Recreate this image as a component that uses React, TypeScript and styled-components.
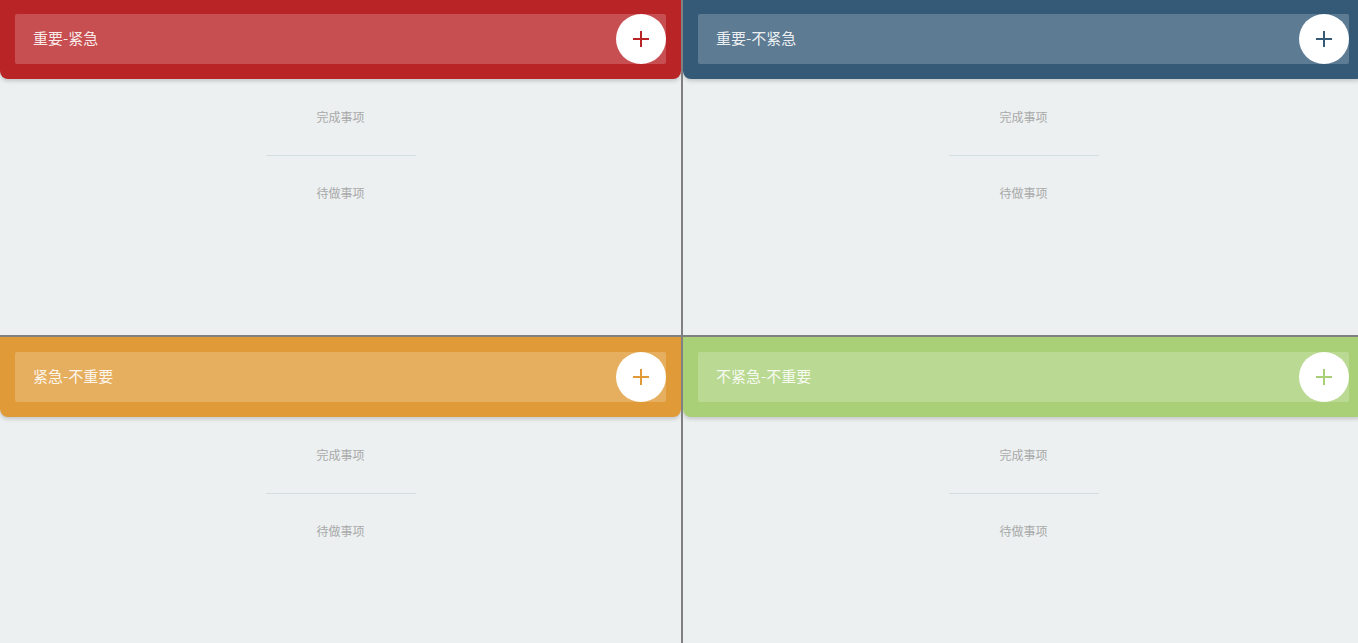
import React from "react";
import styled, { createGlobalStyle } from "styled-components";

const GlobalStyle = createGlobalStyle`
  html, body {
    margin: 0;
    padding: 0;
    background: #ecf0f1;
    overflow: hidden;
  }
  body {
    font-family: "Noto Sans CJK SC", "Noto Sans", sans-serif;
  }
`;

const Board = styled.div`
  display: grid;
  grid-template-columns: 681px 2px 681px;
  grid-template-rows: 335px 2px 306px;
  width: 1364px;
  height: 643px;
  background: #ecf0f1;
`;

const VLine = styled.div`
  background: #808080;
  grid-row: 1 / span 3;
  grid-column: 2;
`;

const HLine = styled.div`
  background: #808080;
  grid-row: 2;
  grid-column: 1 / span 3;
`;

const Quadrant = styled.section<{ $row: number; $col: number }>`
  grid-row: ${(p) => p.$row};
  grid-column: ${(p) => p.$col};
  display: flex;
  flex-direction: column;
  overflow: hidden;
`;

const Header = styled.header<{ $color: string; $top: boolean }>`
  position: relative;
  box-sizing: border-box;
  height: 80px;
  margin-top: ${(p) => (p.$top ? "-1px" : "0")};
  padding: 15px;
  background: ${(p) => p.$color};
  border-radius: 0 0 8px 8px;
  box-shadow: 0 2px 4px rgba(0, 0, 0, 0.18);
  flex-shrink: 0;
`;

const TitleInput = styled.div`
  box-sizing: border-box;
  height: 50px;
  padding: 0 0 4px 18px;
  display: flex;
  align-items: center;
  background: rgba(255, 255, 255, 0.2);
  color: rgba(255, 255, 255, 0.9);
  font-size: 15px;
  border-radius: 2px;
`;

const AddButton = styled.button<{ $color: string }>`
  position: absolute;
  right: 15px;
  top: 15px;
  width: 50px;
  height: 50px;
  border: none;
  border-radius: 50%;
  background: #ffffff;
  color: ${(p) => p.$color};
  display: flex;
  align-items: center;
  justify-content: center;
  padding: 0;
  cursor: pointer;
`;

const Lists = styled.div`
  display: flex;
  flex-direction: column;
  align-items: center;
  padding-top: 28px;
`;

const ListTitle = styled.div`
  font-size: 12px;
  line-height: 20px;
  color: #a9a9a9;
  text-align: center;
`;

const Divider = styled.div`
  width: 150px;
  height: 1px;
  background: #d3dede;
  margin: 28px 0 27px;
`;

const Plus = () => (
  <svg width="18" height="18" viewBox="0 0 18 18" fill="none">
    <path d="M9 1v16M1 9h16" stroke="currentColor" strokeWidth="2" />
  </svg>
);

const quadrants = [
  { title: "重要-紧急", color: "#b92426", row: 1, col: 1 },
  { title: "重要-不紧急", color: "#355a78", row: 1, col: 3 },
  { title: "紧急-不重要", color: "#e09b38", row: 3, col: 1 },
  { title: "不紧急-不重要", color: "#a9d077", row: 3, col: 3 },
];

export default function App() {
  return (
    <>
      <GlobalStyle />
      <Board>
        {quadrants.map((q) => (
          <Quadrant key={q.title} $row={q.row} $col={q.col}>
            <Header $color={q.color} $top={q.row === 1}>
              <TitleInput>{q.title}</TitleInput>
              <AddButton $color={q.color} aria-label="添加">
                <Plus />
              </AddButton>
            </Header>
            <Lists>
              <ListTitle>完成事项</ListTitle>
              <Divider />
              <ListTitle>待做事项</ListTitle>
            </Lists>
          </Quadrant>
        ))}
        <VLine />
        <HLine />
      </Board>
    </>
  );
}
